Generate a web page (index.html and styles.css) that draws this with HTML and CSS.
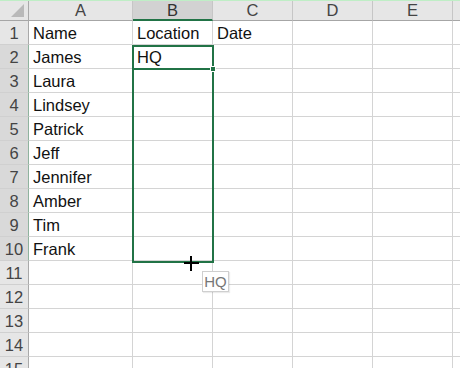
FILE: index.html
```html
<!DOCTYPE html>
<html>
<head>
<meta charset="utf-8">
<link rel="stylesheet" href="styles.css">
</head>
<body>
<div class="sheet">
  <div class="row head">
    <div class="rh corner"><span class="tri"></span></div>
    <div class="c ca">A</div>
    <div class="c cb sel">B</div>
    <div class="c">C</div>
    <div class="c">D</div>
    <div class="c">E</div>
    <div class="c">&nbsp;</div>
  </div>
  <div class="row"><div class="rh">1</div><div class="c ca">Name</div><div class="c cb">Location</div><div class="c">Date</div><div class="c"></div><div class="c"></div><div class="c"></div></div>
  <div class="row"><div class="rh hl">2</div><div class="c ca">James</div><div class="c cb">HQ</div><div class="c"></div><div class="c"></div><div class="c"></div><div class="c"></div></div>
  <div class="row"><div class="rh hl">3</div><div class="c ca">Laura</div><div class="c cb"></div><div class="c"></div><div class="c"></div><div class="c"></div><div class="c"></div></div>
  <div class="row"><div class="rh hl">4</div><div class="c ca">Lindsey</div><div class="c cb"></div><div class="c"></div><div class="c"></div><div class="c"></div><div class="c"></div></div>
  <div class="row"><div class="rh hl">5</div><div class="c ca">Patrick</div><div class="c cb"></div><div class="c"></div><div class="c"></div><div class="c"></div><div class="c"></div></div>
  <div class="row"><div class="rh hl">6</div><div class="c ca">Jeff</div><div class="c cb"></div><div class="c"></div><div class="c"></div><div class="c"></div><div class="c"></div></div>
  <div class="row"><div class="rh hl">7</div><div class="c ca">Jennifer</div><div class="c cb"></div><div class="c"></div><div class="c"></div><div class="c"></div><div class="c"></div></div>
  <div class="row"><div class="rh hl">8</div><div class="c ca">Amber</div><div class="c cb"></div><div class="c"></div><div class="c"></div><div class="c"></div><div class="c"></div></div>
  <div class="row"><div class="rh hl">9</div><div class="c ca">Tim</div><div class="c cb"></div><div class="c"></div><div class="c"></div><div class="c"></div><div class="c"></div></div>
  <div class="row"><div class="rh hl">10</div><div class="c ca">Frank</div><div class="c cb"></div><div class="c"></div><div class="c"></div><div class="c"></div><div class="c"></div></div>
  <div class="row"><div class="rh">11</div><div class="c ca"></div><div class="c cb"></div><div class="c"></div><div class="c"></div><div class="c"></div><div class="c"></div></div>
  <div class="row"><div class="rh">12</div><div class="c ca"></div><div class="c cb"></div><div class="c"></div><div class="c"></div><div class="c"></div><div class="c"></div></div>
  <div class="row"><div class="rh">13</div><div class="c ca"></div><div class="c cb"></div><div class="c"></div><div class="c"></div><div class="c"></div><div class="c"></div></div>
  <div class="row"><div class="rh">14</div><div class="c ca"></div><div class="c cb"></div><div class="c"></div><div class="c"></div><div class="c"></div><div class="c"></div></div>
  <div class="row"><div class="rh">15</div><div class="c ca"></div><div class="c cb"></div><div class="c"></div><div class="c"></div><div class="c"></div><div class="c"></div></div>

  <div class="selection"></div>
  <div class="active-line"></div>
  <div class="handle"></div>
  <div class="cursor"><span class="h"></span><span class="v"></span></div>
  <div class="tip">HQ</div>
</div>
</body>
</html>
```

FILE: styles.css
```css
* { box-sizing: border-box; }
html, body { margin: 0; padding: 0; background: #fff; }
body { width: 460px; height: 368px; overflow: hidden; }
.sheet {
  position: relative;
  width: 460px;
  height: 368px;
  overflow: hidden;
  font-family: "Liberation Sans", Arial, sans-serif;
  font-size: 16.5px;
  color: #111;
  border-top: 1px solid #bfeec6;
}
.row {
  display: flex;
  height: 24px;
}
.row.head {
  height: 20px;
  background: #e6e6e6;
}
.rh {
  flex: 0 0 29px;
  height: 100%;
  background: #e6e6e6;
  border-right: 1px solid #a9a9a9;
  border-bottom: 1px solid #d0d0d0;
  color: #444;
  text-align: center;
  line-height: 25px;
  font-size: 16.5px;
}
.rh.hl { background: #d9d9d9; border-right: 1px solid #8fb39e; }
.c {
  flex: 0 0 80px;
  height: 100%;
  border-right: 1px solid #d4d4d4;
  border-bottom: 1px solid #d4d4d4;
  padding-left: 4px;
  line-height: 25px;
  white-space: nowrap;
  overflow: hidden;
}
.c.ca { flex-basis: 104px; }
.head .c, .head .rh {
  border-bottom: 1px solid #a6a6a6;
  border-right: 1px solid #c6c6c6;
  text-align: center;
  padding-left: 0;
  line-height: 19px;
  color: #444;
  background: #e6e6e6;
}
.head .rh { border-right: 1px solid #a9a9a9; }
.head .c.sel {
  background: #d2d2d2;
  border-bottom: 2px solid #217346;
  color: #333;
}
.corner { position: relative; }
.tri {
  position: absolute;
  right: 4px;
  bottom: 3px;
  width: 0;
  height: 0;
  border-left: 13px solid transparent;
  border-bottom: 13px solid #b9b9b9;
}
.selection {
  position: absolute;
  left: 132px;
  top: 44px;
  width: 82px;
  height: 218px;
  border: 2px solid #217346;
}
.active-line {
  position: absolute;
  left: 132px;
  top: 67px;
  width: 82px;
  height: 2px;
  background: #217346;
}
.handle {
  position: absolute;
  left: 210px;
  top: 65px;
  width: 6px;
  height: 6px;
  background: #217346;
  border: 1px solid #fff;
}
.cursor {
  position: absolute;
  left: 184px;
  top: 255px;
  width: 15px;
  height: 15px;
}
.cursor .h {
  position: absolute;
  left: 0;
  top: 6px;
  width: 15px;
  height: 2px;
  background: #000;
}
.cursor .v {
  position: absolute;
  left: 6px;
  top: 0;
  width: 2px;
  height: 15px;
  background: #000;
}
.tip {
  position: absolute;
  left: 202px;
  top: 270px;
  width: 27px;
  height: 21px;
  background: #fff;
  border: 1px solid #cfcfcf;
  color: #777;
  font-size: 15px;
  line-height: 19px;
  text-align: center;
  box-shadow: 1px 1px 1px rgba(0,0,0,0.08);
}
```
